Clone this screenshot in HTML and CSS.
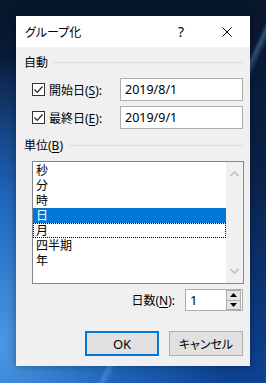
FILE: index.html
```html
<!DOCTYPE html>
<html lang="ja">
<head>
  <meta charset="UTF-8" />
  <title>グループ化</title>
  <link rel="stylesheet" href="styles.css">
</head>
<body>

  <div class="dialog">
    <div class="titlebar">
      <span class="title kana">グループ化</span>
      <span class="tb-btn">?</span>
      <span class="tb-btn">
        <svg width="10" height="10" viewBox="0 0 10 10"><path d="M0.5 0.5 L9.5 9.5 M9.5 0.5 L0.5 9.5" stroke="#000" stroke-width="1" fill="none"/></svg>
      </span>
    </div>

    <div class="body">
      <!-- 自動 -->
      <div class="group-head"><span>自動</span><i class="rule"></i></div>

      <div class="field-row first">
        <span class="check"><svg width="11" height="11" viewBox="0 0 11 11"><path d="M1.5 5.5 L4.2 8.3 L9.5 2.5" stroke="#222" stroke-width="1.2" fill="none"/></svg></span>
        <span class="lbl">開始日(<u>S</u>):</span>
        <span class="textbox">2019/8/1</span>
      </div>
      <div class="field-row">
        <span class="check"><svg width="11" height="11" viewBox="0 0 11 11"><path d="M1.5 5.5 L4.2 8.3 L9.5 2.5" stroke="#222" stroke-width="1.2" fill="none"/></svg></span>
        <span class="lbl">最終日(<u>E</u>):</span>
        <span class="textbox">2019/9/1</span>
      </div>

      <!-- 単位 -->
      <div class="group-head second"><span>単位(<u>B</u>)</span><i class="rule"></i></div>

      <div class="listbox">
        <ul class="items">
          <li>秒</li>
          <li>分</li>
          <li>時</li>
          <li class="selected">日</li>
          <li class="focused">月</li>
          <li>四半期</li>
          <li>年</li>
        </ul>
        <div class="scrollbar">
          <svg width="9" height="6" viewBox="0 0 9 6"><path d="M0.5 5 L4.5 1 L8.5 5" stroke="#bfbfbf" stroke-width="1.6" fill="none"/></svg>
          <svg width="9" height="6" viewBox="0 0 9 6"><path d="M0.5 1 L4.5 5 L8.5 1" stroke="#bfbfbf" stroke-width="1.6" fill="none"/></svg>
        </div>
      </div>

      <div class="spin-row">
        <span class="lbl">日数(<u>N</u>):</span>
        <div class="spinbox">
          <span class="value">1</span>
          <div class="spin-btns">
            <span class="spin-btn"><svg width="7" height="4" viewBox="0 0 7 4"><path d="M0 4 L3.5 0 L7 4 Z" fill="#000"/></svg></span>
            <span class="spin-btn"><svg width="7" height="4" viewBox="0 0 7 4"><path d="M0 0 L3.5 4 L7 0 Z" fill="#000"/></svg></span>
          </div>
        </div>
      </div>

      <div class="buttons">
        <button class="btn default">OK</button>
        <button class="btn kana">キャンセル</button>
      </div>
    </div>
  </div>

</body>
</html>
```

FILE: styles.css
```css
/* Algemeen */
html, body {
  margin: 0;
  padding: 0;
}
body {
  width: 266px;
  height: 383px;
  overflow: hidden;
  padding: 16px 0 0 16px;
  box-sizing: border-box;
  font-family: "Noto Sans", "Noto Sans CJK JP", sans-serif;
  font-size: 12px;
  color: #000;
  background:
    linear-gradient(115deg, transparent 62%, rgba(120,180,240,0.35) 63%, transparent 64.5%),
    radial-gradient(ellipse at 0% 90%, #4a97e2 0%, #1f66bd 30%, rgba(20,80,170,0) 60%),
    linear-gradient(to bottom, #08162b 0%, #0a2148 45%, #0c3a82 85%, #0d4394 100%);
}
.kana {
  font-feature-settings: "palt";
}
u {
  text-decoration-thickness: 1px;
  text-underline-offset: 2px;
}

/* Dialoog */
.dialog {
  width: 234px;
  height: 350px;
  background: #f0f0f0;
  box-shadow: 0 0 8px rgba(0,0,0,0.35);
  display: flex;
  flex-direction: column;
}
.titlebar {
  height: 31px;
  background: #fff;
  display: flex;
  align-items: center;
}
.title {
  flex: 1;
  padding-left: 9px;
}
.tb-btn {
  width: 46px;
  height: 31px;
  display: flex;
  align-items: center;
  justify-content: center;
  font-size: 14px;
}

.body {
  flex: 1;
  padding: 0 6px 0 8px;
  display: flex;
  flex-direction: column;
}

/* Groepskop */
.group-head {
  display: flex;
  align-items: center;
  height: 16px;
  margin-top: 7px;
}
.group-head.second {
  margin-top: 8px;
}
.group-head .rule {
  flex: 1;
  height: 1px;
  background: #dcdcdc;
  margin-left: 5px;
}

/* Velden */
.field-row {
  display: flex;
  align-items: center;
  height: 23px;
  margin: 5px 1px 0 8px;
}
.field-row.first {
  margin-top: 8px;
}
.check {
  width: 11px;
  height: 11px;
  border: 1px solid #333;
  background: #fff;
  display: flex;
  margin-right: 4px;
}
.textbox {
  margin-left: auto;
  width: 117px;
  height: 21px;
  border: 1px solid #adadad;
  background: #fff;
  padding-left: 4px;
  line-height: 21px;
  font-size: 12.5px;
}

/* Lijst */
.listbox {
  margin: 8px 0 0 8px;
  height: 121px;
  border: 1px solid #828790;
  background: #fff;
  display: flex;
}
.items {
  list-style: none;
  margin: 0;
  padding: 1px 0 0 0;
  flex: 1;
}
.items li {
  height: 15px;
  line-height: 15px;
  padding-left: 3px;
  box-sizing: border-box;
}
.items li.selected {
  background: #0078d7;
  color: #fff;
}
.items li.focused {
  border: 1px dotted #000;
  line-height: 13px;
  padding-left: 2px;
}
.scrollbar {
  width: 17px;
  background: #f0f0f0;
  display: flex;
  flex-direction: column;
  justify-content: space-between;
  align-items: center;
  padding: 9px 0 9px;
}

/* Aantal dagen */
.spin-row {
  display: flex;
  align-items: center;
  justify-content: flex-end;
  height: 22px;
  margin: 5px 1px 0 0;
}
.spinbox {
  width: 56px;
  height: 20px;
  margin-left: 10px;
  border: 1px solid #adadad;
  background: #fff;
  display: flex;
}
.spinbox .value {
  flex: 1;
  padding-left: 4px;
  line-height: 20px;
  font-size: 13px;
}
.spin-btns {
  width: 15px;
  display: flex;
  flex-direction: column;
  padding: 0 1px 0 0;
}
.spin-btn {
  flex: 1;
  background: #e5e5e5;
  border: 1px solid #adadad;
  display: flex;
  align-items: center;
  justify-content: center;
}
.spin-btn + .spin-btn {
  border-top: none;
}

/* Knoppen */
.buttons {
  display: flex;
  justify-content: flex-end;
  gap: 10px;
  margin: 20px 1px 0 0;
}
.btn {
  width: 74px;
  height: 25px;
  background: #e1e1e1;
  border: 1px solid #adadad;
  font-family: inherit;
  font-size: 12px;
  color: #000;
  padding: 0;
}
.btn.default {
  border: 2px solid #0078d7;
  font-size: 13px;
}
```
